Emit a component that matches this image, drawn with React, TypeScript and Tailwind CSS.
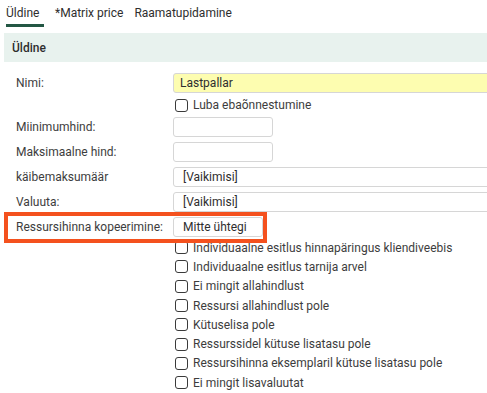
import React from 'react';

const font = { fontFamily: 'Roboto, "Liberation Sans", sans-serif' };

const CHECKS = [
  'Individuaalne esitlus hinnapäringus kliendiveebis',
  'Individuaalne esitlus tarnija arvel',
  'Ei mingit allahindlust',
  'Ressursi allahindlust pole',
  'Kütuselisa pole',
  'Ressurssidel kütuse lisatasu pole',
  'Ressursihinna eksemplaril kütuse lisatasu pole',
  'Ei mingit lisavaluutat',
];

const Box: React.FC = () => (
  <span className="inline-block w-[13px] h-[13px] shrink-0 rounded-[3px] border border-[#3a3a3a] bg-white" />
);

const Row: React.FC<{ label: string; children: React.ReactNode }> = ({ label, children }) => (
  <div className="flex items-center h-[20px] mb-[5px]">
    <div className="w-[157px] shrink-0 text-[12px] text-[#3d3d3d]">{label}</div>
    {children}
  </div>
);

const App: React.FC = () => {
  return (
    <div className="w-[487px] h-[393px] overflow-hidden bg-white" style={font}>
      {/* Tabs */}
      <div className="flex h-[33px] pl-[6px] gap-[11px] text-[12px] text-[#2e2e2e]">
        <div className="flex flex-col">
          <span className="pt-[6px] leading-[14px]">Üldine</span>
          <span className="mt-[4px] h-[3px] bg-[#235744] w-[38px]" />
        </div>
        <span className="pt-[6px] leading-[14px]">*Matrix price</span>
        <span className="pt-[6px] leading-[14px]">Raamatupidamine</span>
      </div>

      {/* Section header */}
      <div className="ml-[4px] h-[29px] bg-[#e8f2ee] flex items-center pl-[8px] text-[12px] font-medium text-[#2e2e2e]">
        Üldine
      </div>

      {/* Form */}
      <div className="pl-[16px] pt-[11px]">
        <Row label="Nimi:">
          <div className="h-[20px] w-[400px] shrink-0 rounded-[3px] border border-[#d6d6d6] bg-[#fdfdb0] pl-[6px] text-[12px] leading-[18px] text-[#2e2e2e]">
            Lastpallar
          </div>
        </Row>
        <div className="flex items-center h-[14px] mb-[5px] pl-[159px] gap-[5px] text-[12px] text-[#3d3d3d]">
          <Box />
          <span>Luba ebaõnnestumine</span>
        </div>
        <Row label="Miinimumhind:">
          <div className="h-[20px] w-[100px] rounded-[3px] border border-[#d6d6d6] bg-white" />
        </Row>
        <Row label="Maksimaalne hind:">
          <div className="h-[20px] w-[100px] rounded-[3px] border border-[#d6d6d6] bg-white" />
        </Row>
        <Row label="käibemaksumäär">
          <div className="h-[20px] w-[400px] shrink-0 rounded-[3px] border border-[#d6d6d6] bg-white pl-[9px] text-[12px] leading-[18px] text-[#2e2e2e]">
            [Vaikimisi]
          </div>
        </Row>
        <Row label="Valuuta:">
          <div className="h-[20px] w-[400px] shrink-0 rounded-[3px] border border-[#d6d6d6] bg-white pl-[9px] text-[12px] leading-[18px] text-[#2e2e2e]">
            [Vaikimisi]
          </div>
        </Row>
        <div className="relative flex items-center h-[20px]">
          <div className="w-[157px] shrink-0 text-[12px] text-[#3d3d3d]">Ressursihinna kopeerimine:</div>
          <div className="h-[20px] w-[90px] rounded-[3px] border border-[#d6d6d6] bg-white pl-[9px] text-[12px] leading-[18px] text-[#2e2e2e]">
            Mitte ühtegi
          </div>
          <div className="absolute left-[-12px] top-[-5px] w-[263px] h-[31px] border-[4px] border-[#f4511e] z-10" />
        </div>

        <div className="pl-[159px] pt-[1px]">
          {CHECKS.map((c) => (
            <div key={c} className="flex items-center h-[19.3px] gap-[5px] text-[12px] text-[#3d3d3d] whitespace-nowrap">
              <Box />
              <span>{c}</span>
            </div>
          ))}
        </div>
      </div>
    </div>
  );
};

export default App;
